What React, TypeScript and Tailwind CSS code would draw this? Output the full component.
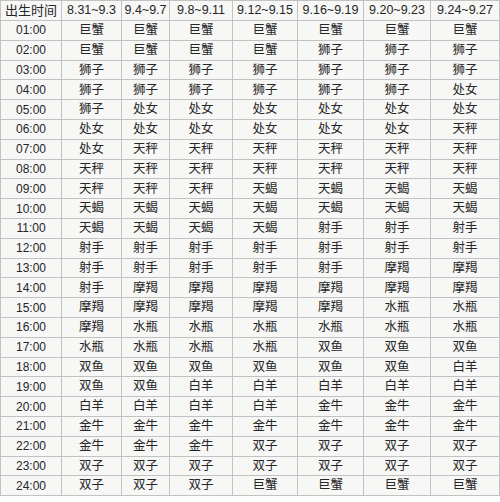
const headers = ['出生时间', '8.31~9.3', '9.4~9.7', '9.8~9.11', '9.12~9.15', '9.16~9.19', '9.20~9.23', '9.24~9.27']

const rows: [string, string][] = [
  ['01:00', '巨蟹 巨蟹 巨蟹 巨蟹 巨蟹 巨蟹 巨蟹'],
  ['02:00', '巨蟹 巨蟹 巨蟹 巨蟹 狮子 狮子 狮子'],
  ['03:00', '狮子 狮子 狮子 狮子 狮子 狮子 狮子'],
  ['04:00', '狮子 狮子 狮子 狮子 狮子 狮子 处女'],
  ['05:00', '狮子 处女 处女 处女 处女 处女 处女'],
  ['06:00', '处女 处女 处女 处女 处女 处女 天秤'],
  ['07:00', '处女 天秤 天秤 天秤 天秤 天秤 天秤'],
  ['08:00', '天秤 天秤 天秤 天秤 天秤 天秤 天秤'],
  ['09:00', '天秤 天秤 天秤 天蝎 天蝎 天蝎 天蝎'],
  ['10:00', '天蝎 天蝎 天蝎 天蝎 天蝎 天蝎 天蝎'],
  ['11:00', '天蝎 天蝎 天蝎 天蝎 射手 射手 射手'],
  ['12:00', '射手 射手 射手 射手 射手 射手 射手'],
  ['13:00', '射手 射手 射手 射手 射手 摩羯 摩羯'],
  ['14:00', '射手 摩羯 摩羯 摩羯 摩羯 摩羯 摩羯'],
  ['15:00', '摩羯 摩羯 摩羯 摩羯 摩羯 水瓶 水瓶'],
  ['16:00', '摩羯 水瓶 水瓶 水瓶 水瓶 水瓶 水瓶'],
  ['17:00', '水瓶 水瓶 水瓶 水瓶 双鱼 双鱼 双鱼'],
  ['18:00', '双鱼 双鱼 双鱼 双鱼 双鱼 双鱼 白羊'],
  ['19:00', '双鱼 双鱼 白羊 白羊 白羊 白羊 白羊'],
  ['20:00', '白羊 白羊 白羊 白羊 金牛 金牛 金牛'],
  ['21:00', '金牛 金牛 金牛 金牛 金牛 金牛 金牛'],
  ['22:00', '金牛 金牛 金牛 双子 双子 双子 双子'],
  ['23:00', '双子 双子 双子 双子 双子 双子 双子'],
  ['24:00', '双子 双子 双子 巨蟹 巨蟹 巨蟹 巨蟹'],
]

const widths = ['w-[61px]', 'w-[60px]', 'w-[48px]', 'w-[63px]', 'w-[65px]', 'w-[66px]', 'w-[67px]', 'w-[69px]']

const cell = 'border border-[#c2c2c2] bg-[#f7f7f6] p-0 text-center align-middle leading-none'

export default function App() {
  return (
    <div className="w-[500px] h-[502px] bg-white font-['Liberation_Sans','Noto_Sans_CJK_SC',sans-serif] text-[12px] text-[#262626]">
      <table className="w-[499px] table-fixed border-collapse">
        <colgroup>
          {widths.map((w, i) => (
            <col key={i} className={w} />
          ))}
        </colgroup>
        <thead>
          <tr className="h-[20px]">
            {headers.map((h, i) => (
              <th key={h} className={`${cell} font-normal ${i === 0 ? 'text-[13px]' : 'text-[12.5px]'}`}>
                {h}
              </th>
            ))}
          </tr>
        </thead>
        <tbody>
          {rows.map(([time, signs]) => (
            <tr key={time} className="h-[19.8px]">
              <td className={cell}>{time}</td>
              {signs.split(' ').map((s, i) => (
                <td key={i} className={`${cell} text-[12.5px]`}>
                  {s}
                </td>
              ))}
            </tr>
          ))}
        </tbody>
      </table>
    </div>
  )
}
